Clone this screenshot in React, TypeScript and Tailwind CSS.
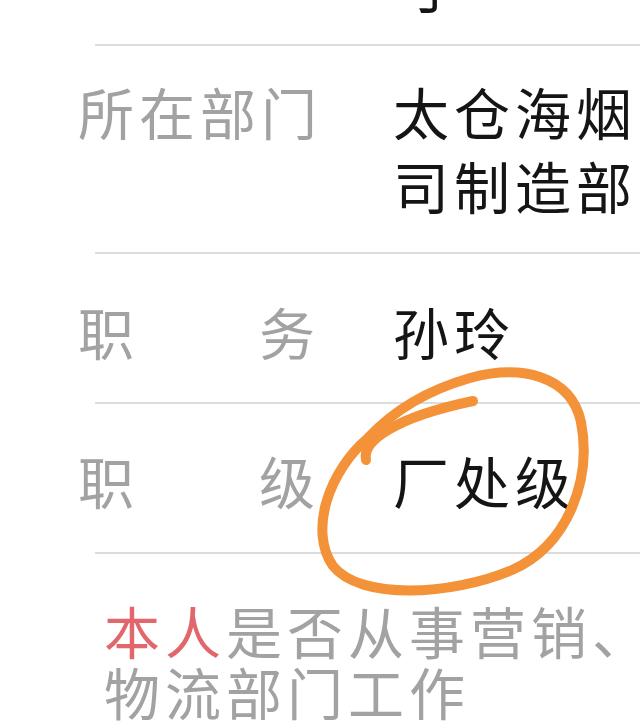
import React from 'react';

const font = { fontFamily: '"Noto Sans CJK SC", "Noto Sans", sans-serif' };

const Divider = () => <div className="ml-[95px] h-[2px] bg-[#dcdcdc]" />;

const Label: React.FC<{ text: string }> = ({ text }) => (
  <div className="w-[393px] shrink-0 pl-[78px] whitespace-nowrap text-[#a2a2a2] tracking-[5px]">{text}</div>
);

const SpreadLabel: React.FC<{ a: string; b: string }> = ({ a, b }) => (
  <div className="w-[393px] shrink-0 pl-[78px] text-[#a2a2a2]">
    <div className="flex w-[237px] justify-between">
      <span>{a}</span>
      <span>{b}</span>
    </div>
  </div>
);

const Value: React.FC<{ children: React.ReactNode }> = ({ children }) => (
  <div className="w-[372px] shrink-0 text-[#151515] tracking-[5px]">{children}</div>
);

const Scribble = () => (
  <svg className="absolute inset-0 pointer-events-none" width="640" height="728" viewBox="0 0 640 728" fill="none">
    <g stroke="#f39238" strokeWidth="10" strokeLinecap="round" strokeLinejoin="round">
      <path d="M366 460 C362 442 392 418 473 401" />
      <path d="M368 438 C330 470 308 530 333 566 C360 600 450 596 512 570 C568 545 592 480 581 422 C571 376 522 364 470 378 C428 390 394 410 368 438" />
    </g>
  </svg>
);

export default function App() {
  return (
    <div className="relative w-[640px] h-[728px] overflow-hidden bg-white text-[56px]" style={font}>
      <div className="flex h-[120px] -mt-[76px] items-center leading-[74px]">
        <div className="w-[393px] shrink-0" />
        <Value>
          <span className="pl-[4px]">寸</span>
        </Value>
      </div>
      <Divider />

      <div className="flex pt-[28px] pb-[30px] leading-[74px]">
        <Label text="所在部门" />
        <Value>太仓海烟草公司制造部</Value>
      </div>
      <Divider />

      <div className="flex pt-[40px] pb-[34px] leading-[74px]">
        <SpreadLabel a="职" b="务" />
        <Value>孙玲</Value>
      </div>
      <Divider />

      <div className="flex pt-[39px] pb-[35px] leading-[74px]">
        <SpreadLabel a="职" b="级" />
        <Value>厂处级</Value>
      </div>
      <Divider />

      <div className="pt-[45px] pl-[104px] leading-[61px] tracking-[5px] text-[#a2a2a2]">
        <div className="w-[560px]">
          <span className="text-[#e2676c]">本人</span>是否从事营销、物流部门工作
        </div>
      </div>

      <Scribble />
    </div>
  );
}
